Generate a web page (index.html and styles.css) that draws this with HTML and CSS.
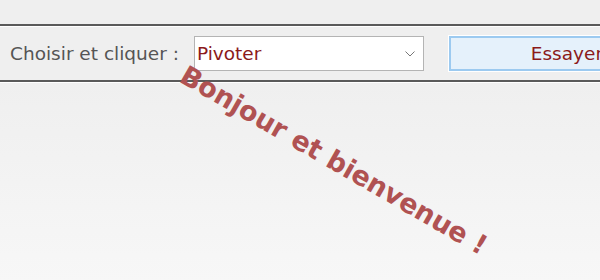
FILE: index.html
```html
<!DOCTYPE html>
<html lang="fr">
<head>
    <meta charset="UTF-8">
    <title>Rotation</title>
    <link rel="stylesheet" href="styles.css">
</head>
<body>
    <div class="top"></div>
    <div class="barre">
        <label class="libelle" for="choix">Choisir et cliquer :</label>
        <div class="liste">
            <select id="choix">
                <option>Pivoter</option>
                <option>Agrandir</option>
                <option>Incliner</option>
            </select>
            <svg class="fleche" width="10" height="6" viewBox="0 0 10 6">
                <path d="M0.5 0.5 L5 5 L9.5 0.5" fill="none" stroke="#777" stroke-width="1"/>
            </svg>
        </div>
        <button class="essayer">Essayer</button>
    </div>
    <div class="scene">
        <div class="message">Bonjour et bienvenue !</div>
    </div>
</body>
</html>
```

FILE: styles.css
```css
html, body {
    margin: 0;
    height: 100%;
}

body {
    background-color: #efefef;
    font-family: "DejaVu Sans", Verdana, sans-serif;
    overflow: hidden;
}

.top {
    height: 24px;
}

.barre {
    display: flex;
    align-items: center;
    height: 54px;
    border-top: 2px solid #5a5a5a;
    border-bottom: 2px solid #5a5a5a;
    box-shadow: inset 0 1px 0 #fff, 0 1px 0 #fff;
    padding-left: 10px;
    white-space: nowrap;
}

.libelle {
    font-size: 18.5px;
    color: #555;
    margin-right: 15px;
}

.liste {
    position: relative;
    flex-shrink: 0;
    width: 230px;
    height: 35px;
}

.liste select {
    appearance: none;
    width: 100%;
    height: 100%;
    box-sizing: border-box;
    border: 1px solid #b4b4b4;
    background: #fff;
    color: #8b1a1a;
    font-family: "DejaVu Sans", Verdana, sans-serif;
    font-size: 18.5px;
    padding: 0 0 0 2px;
    border-radius: 0;
    outline: none;
}

.fleche {
    position: absolute;
    right: 9px;
    top: 15px;
}

.essayer {
    margin-left: 25px;
    width: 236px;
    height: 35px;
    flex-shrink: 0;
    box-sizing: border-box;
    background: #e5f1fb;
    border: 2px solid #9ccaf0;
    outline: 1px solid #fff;
    color: #8b1a1a;
    font-family: "DejaVu Sans", Verdana, sans-serif;
    font-size: 18.5px;
    text-align: center;
    padding: 0;
}

.scene {
    height: calc(100% - 82px);
    background: linear-gradient(#efefef, #f7f7f7);
    border-top: 1px solid #fff;
    position: relative;
}

.message {
    position: absolute;
    left: 334px;
    top: 77px;
    transform: translate(-50%, -50%) rotate(30deg);
    font-size: 27px;
    font-weight: bold;
    color: #b05252;
    white-space: nowrap;
}
```
